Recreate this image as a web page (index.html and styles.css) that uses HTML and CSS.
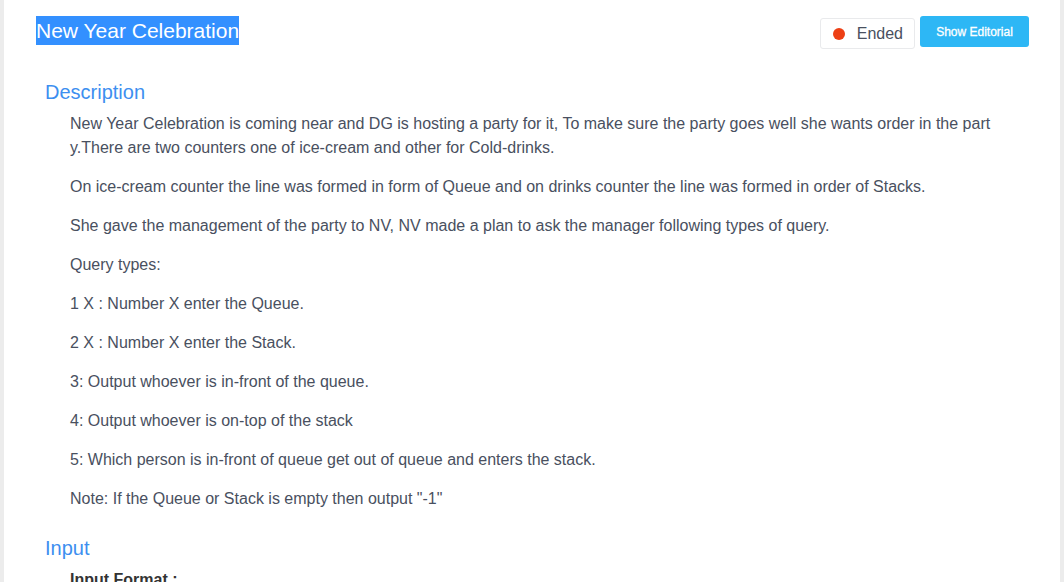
FILE: index.html
```html
<!DOCTYPE html>
<html>
<head>
<meta charset="utf-8">
<link rel="stylesheet" href="styles.css">
</head>
<body>
<div class="card">
  <div class="header">
    <h1 class="title"><span class="sel">New Year Celebration</span></h1>
    <div class="actions">
      <span class="tag"><span class="dot"></span>Ended</span>
      <button class="btn">Show Editorial</button>
    </div>
  </div>
  <div class="section">
    <h2 class="sec-title">Description</h2>
    <div class="content">
      <p>New Year Celebration is coming near and DG is hosting a party for it, To make sure the party goes well she wants order in the party.There are two counters one of ice-cream and other for Cold-drinks.</p>
      <p>On ice-cream counter the line was formed in form of Queue and on drinks counter the line was formed in order of Stacks.</p>
      <p>She gave the management of the party to NV, NV made a plan to ask the manager following types of query.</p>
      <p>Query types:</p>
      <p>1 X : Number X enter the Queue.</p>
      <p>2 X : Number X enter the Stack.</p>
      <p>3: Output whoever is in-front of the queue.</p>
      <p>4: Output whoever is on-top of the stack</p>
      <p>5: Which person is in-front of queue get out of queue and enters the stack.</p>
      <p>Note: If the Queue or Stack is empty then output "-1"</p>
    </div>
  </div>
  <div class="section">
    <h2 class="sec-title">Input</h2>
    <div class="content">
      <p class="strong">Input Format :</p>
    </div>
  </div>
</div>
</body>
</html>
```
FILE: styles.css
```css
html, body {
  margin: 0;
  padding: 0;
  height: 100%;
  overflow: hidden;
}
body {
  background: #ececec;
  font-family: "Liberation Sans", Arial, sans-serif;
  color: #495060;
}
.card {
  background: #fff;
  margin: 0 4px;
  min-height: 100%;
  padding: 16px 31px 0 32px;
  box-sizing: border-box;
}
.header {
  display: flex;
  justify-content: space-between;
  align-items: flex-start;
}
.title {
  margin: 0;
  font-size: 21px;
  font-weight: normal;
  line-height: 29px;
  color: #fff;
}
.sel {
  background: #3390ff;
  display: inline-block;
}
.actions {
  display: flex;
  align-items: flex-start;
  gap: 5px;
}
.tag {
  margin-top: 2px;
  height: 31px;
  box-sizing: border-box;
  border: 1px solid #e9eaec;
  border-radius: 3px;
  padding: 0 11px 0 12px;
  display: flex;
  align-items: center;
  font-size: 16px;
  color: #495060;
}
.dot {
  width: 12px;
  height: 12px;
  border-radius: 50%;
  background: #ed3f14;
  margin-right: 12px;
}
.btn {
  height: 31px;
  width: 109px;
  border: none;
  border-radius: 3px;
  background: #2db7f5;
  color: #fff;
  font-family: "Liberation Sans", Arial, sans-serif;
  font-size: 12px;
  font-weight: normal;
  -webkit-text-stroke: 0.3px #fff;
  padding: 0;
}
.section {
  padding-left: 9px;
}
.sec-title {
  margin: 31px 0 8px;
  font-size: 20px;
  font-weight: normal;
  line-height: 24px;
  color: #3d8ff0;
}
.section + .section .sec-title {
  margin-top: 25px;
}
.content {
  padding-left: 25px;
  width: 928px;
}
.content p {
  margin: 0 0 15px;
  font-size: 16px;
  line-height: 24px;
  word-break: break-all;
}
.content p:last-child {
  margin-bottom: 15px;
}
.strong {
  font-weight: bold;
  color: #333;
}
```
